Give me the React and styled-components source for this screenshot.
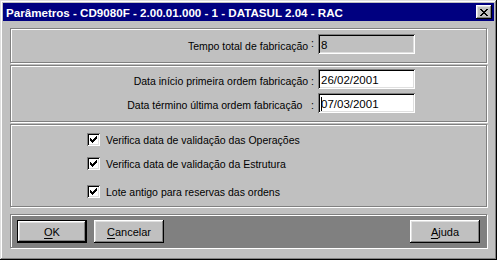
import styled, { createGlobalStyle } from "styled-components";

const GlobalStyle = createGlobalStyle`
    html, body {
        margin: 0;
        padding: 0;
        background: #c0c0c0;
    }
    * {
        box-sizing: border-box;
    }
`;

// pixel patterns for the little win98 glyphs
const checkRows = ["......x", ".....xx", "x...xxx", "xx.xxx.", "xxxxx..", ".xxx...", "..x...."];
const closeRows = ["xx....xx", ".xx..xx.", "..xxxx..", "...xx...", "..xxxx..", ".xx..xx.", "xx....xx"];

const pixelPath = (rows) =>
    rows
        .map((row, y) =>
            row
                .split("")
                .map((c, x) => (c === "x" ? `M${x} ${y}h1v1h-1z` : ""))
                .join("")
        )
        .join("");

const Glyph = ({ rows }) => (
    <svg width={rows[0].length} height={rows.length} shapeRendering="crispEdges">
        <path d={pixelPath(rows)} fill="#000" />
    </svg>
);

const App = () => {
    return (
        <>
            <GlobalStyle />
            <Window>
                <TitleBar>
                    <Title>Parâmetros - CD9080F - 2.00.01.000 - 1 - DATASUL 2.04 - RAC</Title>
                    <CloseButton>
                        <Glyph rows={closeRows} />
                    </CloseButton>
                </TitleBar>
                <Body>
                    <Frame $height={35} $pad="5px 0 0">
                        <FieldRow>
                            <Label>
                                Tempo total de fabricação <RaisedColon>:</RaisedColon>
                            </Label>
                            <Field $disabled>8</Field>
                        </FieldRow>
                    </Frame>
                    <Frame $height={57} $pad="3px 0 0">
                        <FieldRow>
                            <Label>Data início primeira ordem fabricação :</Label>
                            <Field>26/02/2001</Field>
                        </FieldRow>
                        <FieldRow $top={4}>
                            <Label>Data término última ordem fabricação&nbsp;&nbsp;&nbsp;:</Label>
                            <Field>
                                <Caret />
                                07/03/2001
                            </Field>
                        </FieldRow>
                    </Frame>
                    <Frame $height={83} $pad="8px 0 0 76px">
                        <CheckRow>
                            <CheckBox>
                                <Glyph rows={checkRows} />
                            </CheckBox>
                            Verifica data de validação das Operações
                        </CheckRow>
                        <CheckRow $top={11}>
                            <CheckBox>
                                <Glyph rows={checkRows} />
                            </CheckBox>
                            Verifica data de validação da Estrutura
                        </CheckRow>
                        <CheckRow $top={15}>
                            <CheckBox>
                                <Glyph rows={checkRows} />
                            </CheckBox>
                            Lote antigo para reservas das ordens
                        </CheckRow>
                    </Frame>
                    <ButtonBar>
                        <Button $default>
                            <u>O</u>K
                        </Button>
                        <Button>
                            <u>C</u>ancelar
                        </Button>
                        <Spacer />
                        <Button>
                            <u>A</u>juda
                        </Button>
                    </ButtonBar>
                </Body>
            </Window>
        </>
    );
};

const Window = styled.div`
    width: 497px;
    height: 260px;
    padding: 3px;
    background: #c0c0c0;
    display: flex;
    flex-direction: column;
    box-shadow: inset -1px -1px #000, inset 1px 1px #dfdfdf, inset -2px -2px #808080,
        inset 2px 2px #fff;
    font-family: "Liberation Sans", Arial, sans-serif;
    font-size: 10.5px;
    color: #000;
`;

const TitleBar = styled.div`
    height: 18px;
    background: #000080;
    display: flex;
    align-items: center;
    justify-content: space-between;
    padding: 0 2px 0 2px;
`;

const Title = styled.span`
    color: #fff;
    font-weight: bold;
    font-size: 11.6px;
    white-space: nowrap;
    padding-left: 1px;
`;

const CloseButton = styled.div`
    width: 16px;
    height: 14px;
    background: #c0c0c0;
    display: flex;
    align-items: center;
    justify-content: center;
    padding-right: 1px;
    box-shadow: inset -1px -1px #000, inset 1px 1px #fff, inset -2px -2px #808080,
        inset 2px 2px #dfdfdf;
`;

const Body = styled.div`
    flex: 1;
    display: flex;
    flex-direction: column;
    gap: 2px;
    padding: 7px 7px 0 7px;
`;

const Frame = styled.div`
    height: ${(p) => p.$height}px;
    padding: ${(p) => p.$pad};
    border: 1px solid #808080;
    box-shadow: inset 1px 1px #fff, 1px 1px #fff;
    display: flex;
    flex-direction: column;
`;

const FieldRow = styled.div`
    display: flex;
    align-items: center;
    margin-top: ${(p) => p.$top || 0}px;
`;

const Label = styled.div`
    width: 307px;
    padding-right: 4px;
    text-align: right;
    white-space: pre;
    padding-top: 3px;
`;

const RaisedColon = styled.span`
    position: relative;
    top: -3px;
`;

const Field = styled.div`
    width: 97px;
    height: 20px;
    padding: 2px 0 0 3px;
    display: flex;
    align-items: center;
    font-size: 11.5px;
    background: ${(p) => (p.$disabled ? "#c0c0c0" : "#fff")};
    box-shadow: inset 1px 1px #808080, inset -1px -1px #fff, inset 2px 2px #000,
        inset -2px -2px #dfdfdf;
`;

const Caret = styled.span`
    width: 1px;
    height: 14px;
    background: #000;
    margin-right: -1px;
`;

const CheckRow = styled.div`
    display: flex;
    align-items: center;
    gap: 6px;
    margin-top: ${(p) => p.$top || 0}px;
    height: 13px;
`;

const CheckBox = styled.div`
    width: 13px;
    height: 13px;
    flex: none;
    background: #fff;
    display: flex;
    align-items: flex-start;
    justify-content: flex-start;
    padding: 3px 0 0 3px;
    box-shadow: inset 1px 1px #808080, inset -1px -1px #fff, inset 2px 2px #000,
        inset -2px -2px #dfdfdf;
`;

const ButtonBar = styled.div`
    margin-top: 5px;
    height: 34px;
    background: #808080;
    border: 1px solid #808080;
    box-shadow: inset 1px 1px #fff, 1px 1px #fff;
    display: flex;
    align-items: flex-start;
    gap: 7px;
    padding: 5px 6px 0 6px;
`;

const Spacer = styled.div`
    flex: 1;
`;

const Button = styled.div`
    width: 70px;
    height: 23px;
    background: #c0c0c0;
    display: flex;
    align-items: center;
    justify-content: center;
    font-size: 11px;
    border: ${(p) => (p.$default ? "1px solid #000" : "none")};
    box-shadow: inset -1px -1px #000, inset 1px 1px #fff, inset -2px -2px #808080,
        inset 2px 2px #dfdfdf;
    u {
        text-decoration-thickness: 1px;
        text-underline-offset: 2px;
    }
`;

export default App;
